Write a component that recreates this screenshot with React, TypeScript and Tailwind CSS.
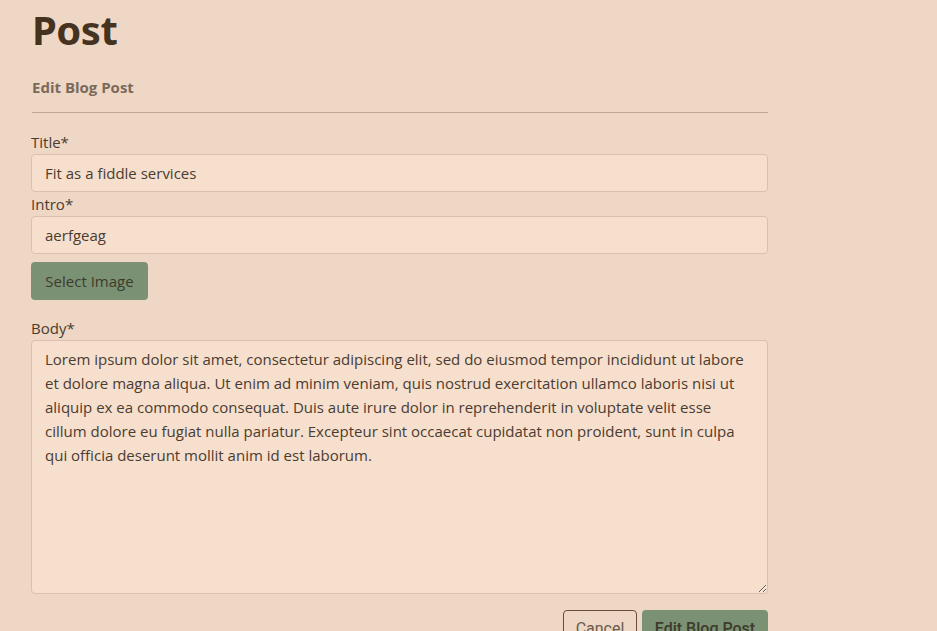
import React from "react";

const body = "Lorem ipsum dolor sit amet, consectetur adipiscing elit, sed do eiusmod tempor incididunt ut labore et dolore magna aliqua. Ut enim ad minim veniam, quis nostrud exercitation ullamco laboris nisi ut aliquip ex ea commodo consequat. Duis aute irure dolor in reprehenderit in voluptate velit esse cillum dolore eu fugiat nulla pariatur. Excepteur sint occaecat cupidatat non proident, sunt in culpa qui officia deserunt mollit anim id est laborum.";

export default function App() {
  return (
    <div className="min-h-[631px] w-full bg-[#efd7c5] overflow-hidden" style={{ fontFamily: '"Open Sans", "Noto Sans", sans-serif' }}>
      <div className="w-[737px] ml-[31px] pt-[6px]">
        <h1 className="ml-[1px] text-[40px] leading-[48px] font-bold text-[#45321f] tracking-[-0.5px]" style={{ fontFamily: '"Noto Sans", sans-serif' }}>Post</h1>
        <h2 className="ml-[1px] mt-[23px] text-[15px] leading-[20px] font-bold text-[#7a6a5c]">Edit Blog Post</h2>
        <hr className="ml-[1px] mt-[15px] border-0 border-t border-[#c2a694]" />
        <div className="mt-[17px] text-[#4a3c30] text-[15px]">
          <label className="block leading-[24px]">Title*</label>
          <input
            readOnly
            value="Fit as a fiddle services"
            className="block w-full h-[38px] px-[13px] rounded-[4px] bg-[#f7dfcd] border border-[#dcc0ad] text-[#4a3c30] text-[15px] outline-none"
          />
          <label className="block leading-[24px]">Intro*</label>
          <input
            readOnly
            value="aerfgeag"
            className="block w-full h-[38px] px-[13px] rounded-[4px] bg-[#f7dfcd] border border-[#dcc0ad] text-[#4a3c30] text-[15px] outline-none"
          />
          <button className="mt-[8px] h-[38px] w-[117px] rounded-[4px] bg-[#7a9273] text-[#3d3a2c] text-[15px]">Select Image</button>
          <label className="block mt-[16px] leading-[24px]">Body*</label>
          <textarea
            readOnly
            value={body}
            className="block w-full h-[254px] px-[13px] py-[6px] rounded-[4px] bg-[#f7dfcd] border border-[#dcc0ad] text-[#4a3c30] text-[15px] leading-[24px] outline-none resize-y"
          />
          <div className="mt-[16px] flex justify-end gap-[5px]">
            <button className="h-[38px] w-[74px] rounded-[4px] border border-[#6b4a36] text-[#6b5a4d] text-[16px]" style={{ fontFamily: 'Roboto, sans-serif' }}>Cancel</button>
            <button className="h-[38px] w-[126px] rounded-[4px] bg-[#7a9273] text-[#3d3a2c] text-[16px] font-medium" style={{ fontFamily: 'Roboto, sans-serif' }}>Edit Blog Post</button>
          </div>
        </div>
      </div>
    </div>
  );
}
